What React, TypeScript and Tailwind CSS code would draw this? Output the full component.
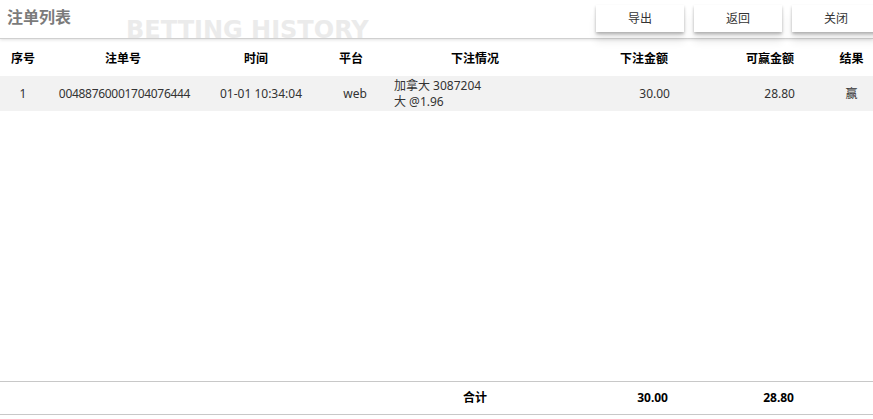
import React from "react";

const cols = [
  { key: "no", title: "序号", w: "w-[46px]", head: "text-center", cell: "text-center" },
  { key: "id", title: "注单号", w: "w-[154px]", head: "text-center", cell: "text-center pl-[3px] tracking-[-0.3px]" },
  { key: "time", title: "时间", w: "w-[112px]", head: "text-center", cell: "text-center pl-[10px]" },
  { key: "plat", title: "平台", w: "w-[78px]", head: "text-center", cell: "text-center pl-[8px]" },
  { key: "info", title: "下注情况", w: "w-[170px]", head: "text-center", cell: "text-left pl-[4px]" },
  { key: "bet", title: "下注金额", w: "w-[116px]", head: "text-right pr-[8px]", cell: "text-right pr-[6px]" },
  { key: "win", title: "可赢金额", w: "w-[154px]", head: "text-right pr-[36px]", cell: "text-right pr-[35px]" },
  { key: "res", title: "结果", w: "w-[43px]", head: "text-center", cell: "text-center" },
];

const rows = [
  {
    no: "1",
    id: "00488760001704076444",
    time: "01-01 10:34:04",
    plat: "web",
    info: ["加拿大 3087204", "大 @1.96"],
    bet: "30.00",
    win: "28.80",
    res: "赢",
  },
];

export default function App() {
  return (
    <div
      className="h-[419px] w-full overflow-hidden bg-white flex flex-col text-[12px] text-[#333]"
      style={{ fontFamily: '"Noto Sans", "Noto Sans CJK SC", sans-serif' }}
    >
      {/* top bar */}
      <div className="relative z-10 h-[39px] shrink-0 flex items-start border-b border-[#d0d0d0] shadow-[0_1px_3px_rgba(0,0,0,0.12)] bg-white">
        <h1 className="pl-[7px] pt-[5px] text-[16px] leading-[24px] font-bold text-[#7b7b7b]">注单列表</h1>
        <div className="ml-[55px] h-[38px] overflow-hidden pt-[18px]">
          <span
            className="block text-[24px] leading-[24px] font-bold text-[#ebebeb] whitespace-nowrap"
            style={{ fontFamily: '"DejaVu Sans", sans-serif' }}
          >
            BETTING HISTORY
          </span>
        </div>
        <div className="ml-auto mr-[-7px] pt-[5px] flex gap-[10px]">
          {["导出", "返回", "关闭"].map((b) => (
            <button
              key={b}
              className="w-[88px] h-[27px] bg-white text-[#333] text-[12px] shadow-[0_2px_3px_rgba(0,0,0,0.28),0_10px_8px_rgba(0,0,0,0.07)]"
            >
              {b}
            </button>
          ))}
        </div>
      </div>

      {/* list */}
      <div className="flex-1 pt-[2px]">
        <table className="w-full table-fixed border-collapse">
          <colgroup>
            {cols.map((c) => (
              <col key={c.key} className={c.w} />
            ))}
          </colgroup>
          <thead>
            <tr className="h-[35px]">
              {cols.map((c) => (
                <th key={c.key} className={`font-bold text-black ${c.head}`}>
                  {c.title}
                </th>
              ))}
            </tr>
          </thead>
          <tbody>
            {rows.map((r) => (
              <tr key={r.id} className="h-[35px] bg-[#f2f2f2]">
                <td className={cols[0].cell}>{r.no}</td>
                <td className={cols[1].cell}>{r.id}</td>
                <td className={cols[2].cell}>{r.time}</td>
                <td className={cols[3].cell}>{r.plat}</td>
                <td className={`${cols[4].cell} leading-[16px]`}>
                  {r.info.map((l) => (
                    <div key={l}>{l}</div>
                  ))}
                </td>
                <td className={cols[5].cell}>{r.bet}</td>
                <td className={cols[6].cell}>{r.win}</td>
                <td className={cols[7].cell}>{r.res}</td>
              </tr>
            ))}
          </tbody>
        </table>
      </div>

      {/* totals */}
      <div className="shrink-0 mb-[4px] border-y border-[#c8c8c8]">
        <table className="w-full table-fixed border-collapse">
          <colgroup>
            {cols.map((c) => (
              <col key={c.key} className={c.w} />
            ))}
          </colgroup>
          <tbody>
            <tr className="h-[32px] font-bold text-black">
              <td />
              <td />
              <td />
              <td />
              <td className="text-center">合计</td>
              <td className="text-right pr-[8px]">30.00</td>
              <td className="text-right pr-[36px]">28.80</td>
              <td />
            </tr>
          </tbody>
        </table>
      </div>
    </div>
  );
}
